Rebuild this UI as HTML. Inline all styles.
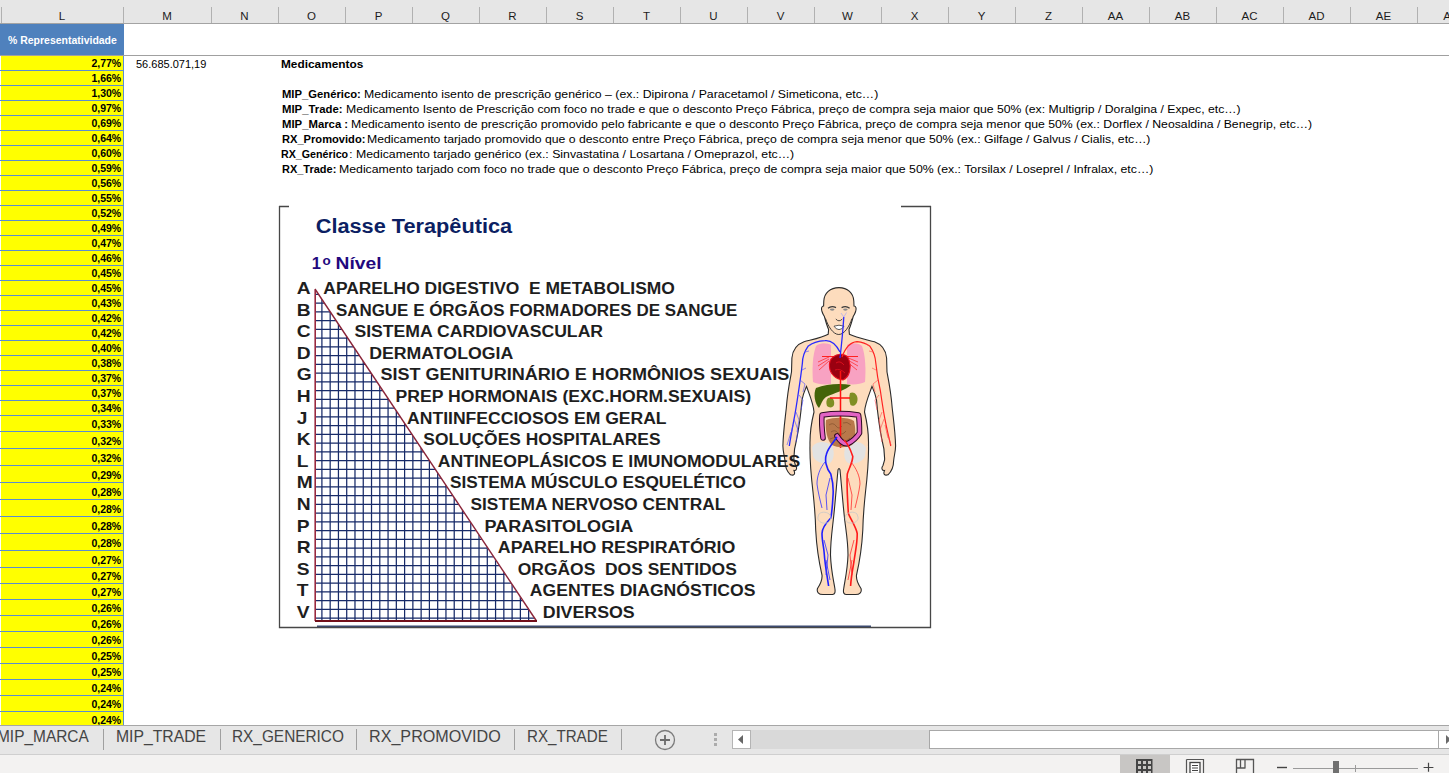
<!DOCTYPE html>
<html><head><meta charset="utf-8">
<style>
*{margin:0;padding:0;box-sizing:border-box}
html,body{width:1449px;height:773px;overflow:hidden;background:#fff;position:relative;font-family:"Liberation Sans",sans-serif}
#hdr{position:absolute;left:0;top:0;width:1449px;height:23px;background:#e6e6e6}
#hdrl{position:absolute;left:0;top:23px;width:1449px;height:1px;background:#a3a3a3}
.cd{position:absolute;top:7px;width:1px;height:16px;background:#b1b1b1}
.ch{position:absolute;top:6px;height:20px;line-height:20px;text-align:center;font-size:11.5px;color:#1c1c1c}
#blue{position:absolute;left:0;top:24px;width:124px;height:31px;background:#4f81bd}
#bluet{position:absolute;left:7.8px;top:32.5px;color:#fff;font-weight:bold;font-size:11px;line-height:14px;white-space:nowrap;transform-origin:0 0;transform:scaleX(0.952)}
#frz{position:absolute;left:0;top:55px;width:1449px;height:1px;background:#a0a0a0}
#yel{position:absolute;left:1px;top:56px;width:122px;height:669px;background:#ff0}
#yb{position:absolute;left:123px;top:56px;width:1px;height:669px;background:#5b8dd0}
.hl{position:absolute;left:0;width:124px;height:1px;background:#5b8dd0}
.yv{position:absolute;right:1328px;font-weight:bold;font-size:11px;line-height:14px;color:#000;transform-origin:100% 0;transform:scaleX(0.955)}
.t{position:absolute;font-size:11.5px;line-height:12px;color:#000;white-space:nowrap;transform-origin:0 0}
.t b{font-weight:bold}
.tab{position:absolute;top:728px;font-size:16px;line-height:18px;color:#444;white-space:nowrap;transform-origin:0 0}
.tsep{position:absolute;top:729px;width:1px;height:21px;background:#a0a0a0}
</style></head><body>
<div id="hdr"></div><div id="hdrl"></div>
<div class="cd" style="left:1px"></div><div class="cd" style="left:123px"></div><div class="cd" style="left:211px"></div><div class="cd" style="left:278px"></div><div class="cd" style="left:345px"></div><div class="cd" style="left:412px"></div><div class="cd" style="left:479px"></div><div class="cd" style="left:546px"></div><div class="cd" style="left:613px"></div><div class="cd" style="left:680px"></div><div class="cd" style="left:747px"></div><div class="cd" style="left:814px"></div><div class="cd" style="left:881px"></div><div class="cd" style="left:948px"></div><div class="cd" style="left:1015px"></div><div class="cd" style="left:1082px"></div><div class="cd" style="left:1149px"></div><div class="cd" style="left:1216px"></div><div class="cd" style="left:1283px"></div><div class="cd" style="left:1350px"></div><div class="cd" style="left:1417px"></div>
<div class="ch" style="left:1px;width:122px">L</div><div class="ch" style="left:123px;width:88px">M</div><div class="ch" style="left:211px;width:67px">N</div><div class="ch" style="left:278px;width:67px">O</div><div class="ch" style="left:345px;width:67px">P</div><div class="ch" style="left:412px;width:67px">Q</div><div class="ch" style="left:479px;width:67px">R</div><div class="ch" style="left:546px;width:67px">S</div><div class="ch" style="left:613px;width:67px">T</div><div class="ch" style="left:680px;width:67px">U</div><div class="ch" style="left:747px;width:67px">V</div><div class="ch" style="left:814px;width:67px">W</div><div class="ch" style="left:881px;width:67px">X</div><div class="ch" style="left:948px;width:67px">Y</div><div class="ch" style="left:1015px;width:67px">Z</div><div class="ch" style="left:1082px;width:67px">AA</div><div class="ch" style="left:1149px;width:67px">AB</div><div class="ch" style="left:1216px;width:67px">AC</div><div class="ch" style="left:1283px;width:67px">AD</div><div class="ch" style="left:1350px;width:67px">AE</div><div class="ch" style="left:1417px;width:67px">AF</div>
<div id="blue"></div><div id="bluet">% Representatividade</div>
<div id="frz"></div>
<div id="yel"></div><div id="yb"></div>
<div class="hl" style="top:70px"></div><div class="yv" style="top:56px">2,77%</div><div class="hl" style="top:85px"></div><div class="yv" style="top:71px">1,66%</div><div class="hl" style="top:100px"></div><div class="yv" style="top:86px">1,30%</div><div class="hl" style="top:115px"></div><div class="yv" style="top:101px">0,97%</div><div class="hl" style="top:130px"></div><div class="yv" style="top:116px">0,69%</div><div class="hl" style="top:145px"></div><div class="yv" style="top:131px">0,64%</div><div class="hl" style="top:160px"></div><div class="yv" style="top:146px">0,60%</div><div class="hl" style="top:175px"></div><div class="yv" style="top:161px">0,59%</div><div class="hl" style="top:190px"></div><div class="yv" style="top:176px">0,56%</div><div class="hl" style="top:205px"></div><div class="yv" style="top:191px">0,55%</div><div class="hl" style="top:220px"></div><div class="yv" style="top:206px">0,52%</div><div class="hl" style="top:235px"></div><div class="yv" style="top:221px">0,49%</div><div class="hl" style="top:250px"></div><div class="yv" style="top:236px">0,47%</div><div class="hl" style="top:265px"></div><div class="yv" style="top:251px">0,46%</div><div class="hl" style="top:280px"></div><div class="yv" style="top:266px">0,45%</div><div class="hl" style="top:295px"></div><div class="yv" style="top:281px">0,45%</div><div class="hl" style="top:310px"></div><div class="yv" style="top:296px">0,43%</div><div class="hl" style="top:325px"></div><div class="yv" style="top:311px">0,42%</div><div class="hl" style="top:340px"></div><div class="yv" style="top:326px">0,42%</div><div class="hl" style="top:355px"></div><div class="yv" style="top:341px">0,40%</div><div class="hl" style="top:370px"></div><div class="yv" style="top:356px">0,38%</div><div class="hl" style="top:385px"></div><div class="yv" style="top:371px">0,37%</div><div class="hl" style="top:400px"></div><div class="yv" style="top:386px">0,37%</div><div class="hl" style="top:415px"></div><div class="yv" style="top:401px">0,34%</div><div class="hl" style="top:431px"></div><div class="yv" style="top:417px">0,33%</div><div class="hl" style="top:448px"></div><div class="yv" style="top:434px">0,32%</div><div class="hl" style="top:465px"></div><div class="yv" style="top:451px">0,32%</div><div class="hl" style="top:482px"></div><div class="yv" style="top:468px">0,29%</div><div class="hl" style="top:499px"></div><div class="yv" style="top:485px">0,28%</div><div class="hl" style="top:516px"></div><div class="yv" style="top:502px">0,28%</div><div class="hl" style="top:533px"></div><div class="yv" style="top:519px">0,28%</div><div class="hl" style="top:550px"></div><div class="yv" style="top:536px">0,28%</div><div class="hl" style="top:567px"></div><div class="yv" style="top:553px">0,27%</div><div class="hl" style="top:583px"></div><div class="yv" style="top:569px">0,27%</div><div class="hl" style="top:599px"></div><div class="yv" style="top:585px">0,27%</div><div class="hl" style="top:615px"></div><div class="yv" style="top:601px">0,26%</div><div class="hl" style="top:631px"></div><div class="yv" style="top:617px">0,26%</div><div class="hl" style="top:647px"></div><div class="yv" style="top:633px">0,26%</div><div class="hl" style="top:663px"></div><div class="yv" style="top:649px">0,25%</div><div class="hl" style="top:679px"></div><div class="yv" style="top:665px">0,25%</div><div class="hl" style="top:695px"></div><div class="yv" style="top:681px">0,24%</div><div class="hl" style="top:711px"></div><div class="yv" style="top:697px">0,24%</div><div class="yv" style="top:713px">0,24%</div>
<div class="t" style="left:136px;top:58px;transform:scaleX(0.9565)">56.685.071,19</div><div class="t" style="left:281px;top:58px;transform:scaleX(1.0302)"><b>Medicamentos</b></div><div class="t" style="left:281.78px;top:88px;transform:scaleX(0.9786)"><b>MIP_Genérico:</b></div><div class="t" style="left:364.14px;top:88px;transform:scaleX(1.0684)">Medicamento isento de prescrição genérico – (ex.: Dipirona / Paracetamol / Simeticona, etc…)</div><div class="t" style="left:281.79px;top:103px;transform:scaleX(0.9855)"><b>MIP_Trade:</b></div><div class="t" style="left:346.07px;top:103px;transform:scaleX(1.0618)">Medicamento Isento de Prescrição com foco no trade e que o desconto Preço Fábrica, preço de compra seja maior que 50% (ex: Multigrip / Doralgina / Expec, etc…)</div><div class="t" style="left:281.76px;top:118px;transform:scaleX(0.9857)"><b>MIP_Marca :</b></div><div class="t" style="left:351.06px;top:118px;transform:scaleX(1.0641)">Medicamento isento de prescrição promovido pelo fabricante e que o desconto Preço Fábrica, preço de compra seja menor que 50% (ex.: Dorflex / Neosaldina / Benegrip, etc…)</div><div class="t" style="left:281.78px;top:133px;transform:scaleX(0.9665)"><b>RX_Promovido:</b></div><div class="t" style="left:367.24px;top:133px;transform:scaleX(1.063)">Medicamento tarjado promovido que o desconto entre Preço Fábrica, preço de compra seja menor que 50% (ex.: Gilfage / Galvus / Cialis, etc…)</div><div class="t" style="left:281.19px;top:148px;transform:scaleX(0.929)"><b>RX_Genérico</b></div><div class="t" style="left:355.66px;top:148px;transform:scaleX(1.0693)">Medicamento tarjado genérico (ex.: Sinvastatina / Losartana / Omeprazol, etc…)</div><div class="t" style="left:281.79px;top:163px;transform:scaleX(0.9544)"><b>RX_Trade:</b></div><div class="t" style="left:338.88px;top:163px;transform:scaleX(1.0681)">Medicamento tarjado com foco no trade que o desconto Preço Fábrica, preço de compra seja maior que 50% (ex.: Torsilax / Loseprel / Infralax, etc…)</div><div class="t" style="left:349.2px;top:148px">:</div>
<svg style="position:absolute;left:0;top:0" width="1449" height="773" viewBox="0 0 1449 773">
<defs><clipPath id="tri"><polygon points="315,289 315,621 536,621"/></clipPath></defs>
<style>
.lt{font-family:"Liberation Sans",sans-serif;font-weight:bold;font-size:16px;fill:#1e1e1e}
.it{font-family:"Liberation Sans",sans-serif;font-weight:bold;font-size:16px;fill:#1e1e1e}
</style>
<path d="M279.5 206V627.5H930.5V206M279 206.5H289M901 206.5H931" fill="none" stroke="#474747" stroke-width="1.3"/>
<path d="M317 626.3H871" stroke="#3c4a6e" stroke-width="1.4"/>
<text x="315.7" y="233.3" textLength="196.5" lengthAdjust="spacingAndGlyphs" style="font-family:'Liberation Sans',sans-serif;font-weight:bold;font-size:20px;fill:#0c1f63">Classe Terapêutica</text>
<g style="font-family:'Liberation Sans',sans-serif;font-weight:bold;fill:#22087e">
<text x="311.8" y="269.3" style="font-size:16.5px">1</text>
<text x="322.5" y="265.2" textLength="8.2" lengthAdjust="spacingAndGlyphs" style="font-size:12.5px">o</text>
<text x="335.5" y="269.3" textLength="46" lengthAdjust="spacingAndGlyphs" style="font-size:16.5px">Nível</text>
</g>
<g clip-path="url(#tri)"><path d="M314 294.30H540M314 303.06H540M314 311.81H540M314 320.56H540M314 329.32H540M314 338.08H540M314 346.83H540M314 355.59H540M314 364.34H540M314 373.10H540M314 381.85H540M314 390.61H540M314 399.36H540M314 408.12H540M314 416.87H540M314 425.62H540M314 434.38H540M314 443.13H540M314 451.89H540M314 460.65H540M314 469.40H540M314 478.16H540M314 486.91H540M314 495.67H540M314 504.42H540M314 513.18H540M314 521.93H540M314 530.69H540M314 539.44H540M314 548.20H540M314 556.95H540M314 565.71H540M314 574.46H540M314 583.22H540M314 591.97H540M314 600.73H540M314 609.48H540M314 618.24H540M321.90 285V622M330.17 285V622M338.44 285V622M346.71 285V622M354.98 285V622M363.25 285V622M371.52 285V622M379.79 285V622M388.06 285V622M396.33 285V622M404.60 285V622M412.87 285V622M421.14 285V622M429.41 285V622M437.68 285V622M445.95 285V622M454.22 285V622M462.49 285V622M470.76 285V622M479.03 285V622M487.30 285V622M495.57 285V622M503.84 285V622M512.11 285V622M520.38 285V622M528.65 285V622" stroke="#172a68" stroke-width="1.25" fill="none"/></g>
<path d="M315.2 289.5V621" stroke="#9a2a40" stroke-width="1.6" fill="none"/>
<path d="M315 289L536.5 621" stroke="#8a2438" stroke-width="1.4" fill="none"/>
<path d="M315 621H537" stroke="#720f1a" stroke-width="2" fill="none"/>
<g id="body">
<path d="M839 287.6C847.5 287.6 853.5 293 853.8 301L854 306C856 306 856.6 308.5 855.6 311.5C855 313.5 854.2 315 853.2 316.5C852 321 850.5 326 849 329.5L849.4 334.2C856 337.5 866 339.5 874.5 341.8C882 344.5 885.8 350 886.6 358L887 372C888.5 380 891 392 892.2 408C893.5 420 895.3 432 895.6 446C895.5 452 894 456 893.6 461C893.6 466 892 471 888 474.8C884.5 476 883 474 884.5 470.5C882 470.8 881 468 883 465.5L884.6 460C884.8 452 884 447 882 440C879.5 428 877.5 412 876.5 400C875.5 394 873.5 390 872 386.5C868.5 396 865 404 864.5 412C866.5 420 868.8 432 868.5 445C868.8 458 867.5 475 865.5 492C864 506 863 520 862.8 530C862 545 860 560 856.5 575C856 580 858 584 861 588.5C862 592 860 594.5 855.5 594.5L846 594.5C843.5 594.5 843 592 843.8 588C845 580 847.5 570 848 555C848 540 845.5 528 844.5 518C843 505 841.5 485 840 470C839.5 468 838.5 468 838 470C836.5 485 835 505 833.5 518C832.5 528 830.5 540 830.5 555C831 570 833.5 580 834.8 588C835.5 592 835 594.5 832.5 594.5L823 594.5C818.5 594.5 816.5 592 817.5 588.5C820.5 584 822.5 580 822 575C818.5 560 816.5 545 815.7 530C815.5 520 814.5 506 813 492C811 475 809.7 458 810 445C809.7 432 812 420 814 412C813.5 404 810 396 806.5 386.5C805 390 803 394 802 400C801 412 799 428 796.5 440C794.5 447 793.7 452 793.9 460L795.5 465.5C797.5 468 796.5 470.8 794 470.5C795.5 474 794 476 790.5 474.8C786.5 471 785 466 785 461C784.5 456 783 452 782.9 446C783.2 432 785 420 786.3 408C787.5 392 790 380 791.5 372L791.9 358C792.7 350 796.5 344.5 804 341.8C812.5 339.5 822.5 337.5 828.2 334.2L828.6 329.5C827.1 326 825.6 321 824.4 316.5C823.4 315 822.6 313.5 822 311.5C821 308.5 821.6 306 823.6 306L823.8 301C824.1 293 830.1 287.6 839 287.6Z" fill="#fddcbd" stroke="#2b2b2b" stroke-width="1.1"/>
<path d="M825.5 318.5C828 326 833 334.5 838.8 334.5C844.5 334.5 849.5 326 852 318.5" fill="none" stroke="#2b2b2b" stroke-width="0.9"/>
<path d="M828 308.2Q831.5 305.2 836 307.6M841.6 307.6Q846 305.2 849.6 308.2" fill="none" stroke="#3a3a3a" stroke-width="1.2"/>
<ellipse cx="832.2" cy="309.6" rx="2.3" ry="1.1" fill="#8a8a8a"/>
<ellipse cx="845.4" cy="309.6" rx="2.3" ry="1.1" fill="#8a8a8a"/>
<path d="M835.8 319Q839 322.6 842.3 319" fill="none" stroke="#333" stroke-width="0.9"/>
<path d="M834 326.2Q839 324.2 844 326.2Q842 329.6 839 329.6Q836 329.6 834 326.2Z" fill="#fff" stroke="#333" stroke-width="0.8"/>
<path d="M816 346C820 342 828 343 831 345L831 384C824 385 817 384 813 382C812 370 812.5 355 816 346Z" fill="#f8a2c2"/>
<path d="M862 346C858 342 850 343 847 345L847 384C854 385 861 384 865 382C866 370 865.5 355 862 346Z" fill="#f8a2c2"/>
<path d="M818 362L829 357M818 366L829 359M819 370L829 361M846 357L858 362M846 359L858 366M846 361L857 370" stroke="#f33" stroke-width="0.8"/>
<path d="M822 356.5h36" stroke="#f22" stroke-width="1"/>
<path d="M833 357C838 353 847 353 849 360C851.5 367 850 377 843 380C836 379.5 830 374 829.5 367C829 362 830.5 359 833 357Z" fill="#9a0010" stroke="#e81020" stroke-width="1.1"/>
<path d="M836 363Q840 360 844 365M835 370Q840 368 845 373" fill="none" stroke="#e81020" stroke-width="0.8"/>
<path d="M816 388C826 384 840 383 851 385C846 390 834 393 826 397C822 400 821 405 819 408C815 404 813 394 816 388Z" fill="#446408"/>
<path d="M828 398C832 396 835 400 834 405C833 408 829 408 827 406C826 403 826 400 828 398Z" fill="#7f8f24"/>
<path d="M850 393C854 391 858 395 857.5 400C857 405 853 407 850.5 405C849 401 849 396 850 393Z" fill="#7f8f24"/>
<path d="M840.5 371V448M830 398h20" stroke="#f11" stroke-width="1.5"/>
<path d="M812 448C815 441 826 440 832 446C835 452 834 460 830 463C824 465 815 462 813 456Z M866 448C863 441 852 440 846 446C843 452 844 460 848 463C854 465 863 462 865 456Z" fill="#e2e2e2"/>
<path d="M826 420C834 417 848 417 854 421C856 430 856 440 852 445C846 448 838 448 832 445C827 440 825 430 826 420Z" fill="#b8784a"/>
<path d="M829 425Q833 422 836 426Q839 430 842 426M831 432Q835 429 838 433Q842 436 846 431M830 439Q836 436 840 440Q845 443 850 438M843 423Q847 421 851 425" fill="none" stroke="#7a4a28" stroke-width="0.6"/>
<path d="M840.5 417V446" stroke="#f11" stroke-width="1.5"/>
<path d="M823 438C822 430 821.5 420 822 415C832 413.5 848 413.5 858.5 415C859.5 420 859.5 428 859.5 433C857 437 853 441 848 443.5C844 444.5 840 441 837 436" fill="none" stroke="#2a0a20" stroke-width="5.6" stroke-linejoin="round" stroke-linecap="round"/>
<path d="M823 438C822 430 821.5 420 822 415C832 413.5 848 413.5 858.5 415C859.5 420 859.5 428 859.5 433C857 437 853 441 848 443.5C844 444.5 840 441 837 436" fill="none" stroke="#e263c4" stroke-width="3.6" stroke-linejoin="round" stroke-linecap="round"/>
<path d="M837 437C833 443 828 448 826.4 454.2C824.5 460 826 468 830.8 474C833 482 833.5 490 833 496C832.5 505 832 512 830.8 518C826 523 822 528 822 533.4C822 541 824 548 824.2 553.2C825 565 827 575 828.6 586" fill="none" stroke="#2020ff" stroke-width="1.6"/>
<path d="M844 440C847.5 443 850 448 852.8 456.4C852.5 463 849 468 847.3 474C846.5 485 847.5 500 848.4 513.6C851 520 856 527 857.2 533.4C857.5 543 855 553 853.9 562C852.5 570 851 578 850.6 586" fill="none" stroke="#ff1a1a" stroke-width="1.6"/>
<path d="M825 462C820 468 817 476 817 484C818 492 820 500 822 508M830 478L826 495L827 510M824 540L828 555L826 575M826 560L830 580" fill="none" stroke="#3030ff" stroke-width="0.8"/>
<path d="M851 462C856 468 860 476 860 484C859 492 857 500 855 508M848 478L852 495L851 510M854 540L850 555L852 575M852 560L848 580" fill="none" stroke="#ff3030" stroke-width="0.8"/>
<path d="M841 313L843.8 317L846.5 312.5" fill="none" stroke="#9a9aff" stroke-width="0.6"/>
<path d="M843.8 317C843 330 841.5 345 840 358M840 352C836 344 831 340 825 340.6C818 341 812 343 808 346.3C804 352 802.5 358 802.4 363C801 375 799.5 385 798.6 391C797 402 795.5 412 794 419.4C792 430 790.5 438 789.3 446" fill="none" stroke="#2a2aff" stroke-width="1.3"/>
<path d="M842 357C846 346 851 342 857 341.6C863 342 867 344 870 346.3C874 352 875.5 358 875.8 363C877 375 879 385 880.4 391C882 402 883.5 412 885 419.4C887 430 889 438 890.8 446" fill="none" stroke="#ff2222" stroke-width="1.2"/>
<path d="M808 346.3L812 344M805 352L809 351M802 370L806 368M800 380L805 384L803 392M799 395L803 400L801 410M796 412L799 420L797 432M793 425L790 438M794 419L798 430L796 442M791 432L787 445" fill="none" stroke="#4a4aff" stroke-width="0.6"/>
<path d="M870 346.3L866 344M873 352L869 351M876 370L872 368M878 380L873 384L875 392M879 395L875 400L877 410M882 412L879 420L881 432M885 425L888 438M884 419L880 430L882 442M887 432L891 445" fill="none" stroke="#ff4a4a" stroke-width="0.6"/>
<path d="M819 514C822 511 828 512 830 515C832 518 830 523 826 523C821 524 817 520 818 517ZM857 514C854 511 848 512 846 515C844 518 846 523 850 523C855 524 859 520 858 517Z" fill="none" stroke="#c8c8c8" stroke-width="0.8"/>
</g>

<text x="296.8" y="294.0" class="lt" transform="translate(297.5 0) scale(1.2 1) translate(-297.5 0)">A</text><text x="323.3" y="294.0" class="it" textLength="351.6" lengthAdjust="spacingAndGlyphs" xml:space="preserve">APARELHO DIGESTIVO  E METABOLISMO</text><text x="296.8" y="315.6" class="lt" transform="translate(297.5 0) scale(1.2 1) translate(-297.5 0)">B</text><text x="335.9" y="315.6" class="it" textLength="401.3" lengthAdjust="spacingAndGlyphs" xml:space="preserve">SANGUE E ÓRGÃOS FORMADORES DE SANGUE</text><text x="296.8" y="337.2" class="lt" transform="translate(297.5 0) scale(1.2 1) translate(-297.5 0)">C</text><text x="354.4" y="337.2" class="it" textLength="248.7" lengthAdjust="spacingAndGlyphs" xml:space="preserve">SISTEMA CARDIOVASCULAR</text><text x="296.8" y="358.8" class="lt" transform="translate(297.5 0) scale(1.2 1) translate(-297.5 0)">D</text><text x="369.2" y="358.8" class="it" textLength="144.1" lengthAdjust="spacingAndGlyphs" xml:space="preserve">DERMATOLOGIA</text><text x="296.8" y="380.4" class="lt" transform="translate(297.5 0) scale(1.2 1) translate(-297.5 0)">G</text><text x="380.4" y="380.4" class="it" textLength="408.9" lengthAdjust="spacingAndGlyphs" xml:space="preserve">SIST GENITURINÁRIO E HORMÔNIOS SEXUAIS</text><text x="296.8" y="402.0" class="lt" transform="translate(297.5 0) scale(1.2 1) translate(-297.5 0)">H</text><text x="395.6" y="402.0" class="it" textLength="355.5" lengthAdjust="spacingAndGlyphs" xml:space="preserve">PREP HORMONAIS (EXC.HORM.SEXUAIS)</text><text x="296.8" y="423.6" class="lt" transform="translate(297.5 0) scale(1.2 1) translate(-297.5 0)">J</text><text x="407.1" y="423.6" class="it" textLength="259.5" lengthAdjust="spacingAndGlyphs" xml:space="preserve">ANTIINFECCIOSOS EM GERAL</text><text x="296.8" y="445.2" class="lt" transform="translate(297.5 0) scale(1.2 1) translate(-297.5 0)">K</text><text x="423.3" y="445.2" class="it" textLength="237.2" lengthAdjust="spacingAndGlyphs" xml:space="preserve">SOLUÇÕES HOSPITALARES</text><text x="296.8" y="466.8" class="lt" transform="translate(297.5 0) scale(1.2 1) translate(-297.5 0)">L</text><text x="437.8" y="466.8" class="it" textLength="362.5" lengthAdjust="spacingAndGlyphs" xml:space="preserve">ANTINEOPLÁSICOS E IMUNOMODULARES</text><text x="296.8" y="488.4" class="lt" transform="translate(297.5 0) scale(1.2 1) translate(-297.5 0)">M</text><text x="450.0" y="488.4" class="it" textLength="295.9" lengthAdjust="spacingAndGlyphs" xml:space="preserve">SISTEMA MÚSCULO ESQUELÉTICO</text><text x="296.8" y="510.0" class="lt" transform="translate(297.5 0) scale(1.2 1) translate(-297.5 0)">N</text><text x="470.5" y="510.0" class="it" textLength="254.7" lengthAdjust="spacingAndGlyphs" xml:space="preserve">SISTEMA NERVOSO CENTRAL</text><text x="296.8" y="531.6" class="lt" transform="translate(297.5 0) scale(1.2 1) translate(-297.5 0)">P</text><text x="484.4" y="531.6" class="it" textLength="148.9" lengthAdjust="spacingAndGlyphs" xml:space="preserve">PARASITOLOGIA</text><text x="296.8" y="553.2" class="lt" transform="translate(297.5 0) scale(1.2 1) translate(-297.5 0)">R</text><text x="497.8" y="553.2" class="it" textLength="237.6" lengthAdjust="spacingAndGlyphs" xml:space="preserve">APARELHO RESPIRATÓRIO</text><text x="296.8" y="574.8" class="lt" transform="translate(297.5 0) scale(1.2 1) translate(-297.5 0)">S</text><text x="517.8" y="574.8" class="it" textLength="219.0" lengthAdjust="spacingAndGlyphs" xml:space="preserve">ORGÃOS  DOS SENTIDOS</text><text x="296.8" y="596.4" class="lt" transform="translate(297.5 0) scale(1.2 1) translate(-297.5 0)">T</text><text x="529.8" y="596.4" class="it" textLength="225.6" lengthAdjust="spacingAndGlyphs" xml:space="preserve">AGENTES DIAGNÓSTICOS</text><text x="296.8" y="618.0" class="lt" transform="translate(297.5 0) scale(1.2 1) translate(-297.5 0)">V</text><text x="542.8" y="618.0" class="it" textLength="91.9" lengthAdjust="spacingAndGlyphs" xml:space="preserve">DIVERSOS</text>
</svg>
<div style="position:absolute;left:0;top:725px;width:1449px;height:1px;background:#a6a6a6"></div>
<div style="position:absolute;left:0;top:726px;width:1449px;height:28px;background:#e6e6e6"></div>
<div style="position:absolute;left:0;top:754px;width:1449px;height:1px;background:#cfcfcf"></div>
<div style="position:absolute;left:0;top:755px;width:1449px;height:18px;background:#f3f2f1"></div>
<div class="tab" style="left:-3px;transform:scaleX(0.965)">MIP_MARCA</div>
<div class="tsep" style="left:103px"></div>
<div class="tab" style="left:115.6px;transform:scaleX(0.984)">MIP_TRADE</div>
<div class="tsep" style="left:220px"></div>
<div class="tab" style="left:231.9px;transform:scaleX(0.961)">RX_GENERICO</div>
<div class="tsep" style="left:356px"></div>
<div class="tab" style="left:368.5px;transform:scaleX(1.008)">RX_PROMOVIDO</div>
<div class="tsep" style="left:514px"></div>
<div class="tab" style="left:527.4px;transform:scaleX(0.946)">RX_TRADE</div>
<div class="tsep" style="left:621px"></div>
<svg style="position:absolute;left:0;top:720px" width="1449" height="53" viewBox="0 720 1449 53">
<circle cx="665" cy="740" r="9.5" fill="none" stroke="#7a7a7a" stroke-width="1.3"/>
<path d="M660 740H670M665 735V745" stroke="#6a6a6a" stroke-width="1.8"/>
<rect x="714" y="733" width="3" height="3" fill="#acacac"/>
<rect x="714" y="738" width="3" height="3" fill="#acacac"/>
<rect x="714" y="743" width="3" height="3" fill="#acacac"/>
<rect x="732.5" y="730.5" width="18" height="18" fill="#fff" stroke="#b4b4b4" stroke-width="1"/>
<path d="M738 739.5L743 735V744Z" fill="#666"/>
<rect x="751" y="730" width="178" height="19" fill="#d9d9d9"/>
<rect x="929.5" y="730.5" width="530" height="18" fill="#fff" stroke="#a8a8a8" stroke-width="1"/>
<path d="M1438.5 731V748" stroke="#a8a8a8" stroke-width="1"/>
<path d="M1446 735L1451 739.5L1446 744Z" fill="#6a6a6a"/>
<rect x="1120" y="755" width="50" height="18" fill="#c8c6c4"/>
<g fill="#444">
<path d="M1136 759h16.5v14h-16.5z M1138 761v3h3v-3z M1143 761v3h3v-3z M1148 761v3h3v-3z M1138 766v3h3v-3z M1143 766v3h3v-3z M1148 766v3h3v-3z M1138 771v2h3v-2z M1143 771v2h3v-2z M1148 771v2h3v-2z" fill-rule="evenodd"/>
</g>
<path d="M1186.5 759.5h17v14M1186.5 759.5v14" fill="none" stroke="#555" stroke-width="1.2"/>
<rect x="1190" y="762.5" width="10" height="11" fill="#fff" stroke="#444" stroke-width="1.3"/>
<path d="M1192 765.5h6M1192 768h6M1192 770.5h6" stroke="#444" stroke-width="1"/>
<path d="M1236.5 773v-13.5h17v13.5M1240.5 759.5v8.5M1245 759.5v8.5M1236.5 768h9" fill="none" stroke="#555" stroke-width="1.3"/>
<path d="M1277 767.5h10" stroke="#444" stroke-width="1.4"/>
<path d="M1293 768.5h125" stroke="#9a9a9a" stroke-width="1"/>
<path d="M1355.5 765v7" stroke="#9a9a9a" stroke-width="1"/>
<rect x="1333" y="761" width="6" height="12" fill="#707070"/>
<path d="M1423.6 767.5h9.8M1428.5 762.8v9" stroke="#444" stroke-width="1.2"/>
</svg>

</body></html>
